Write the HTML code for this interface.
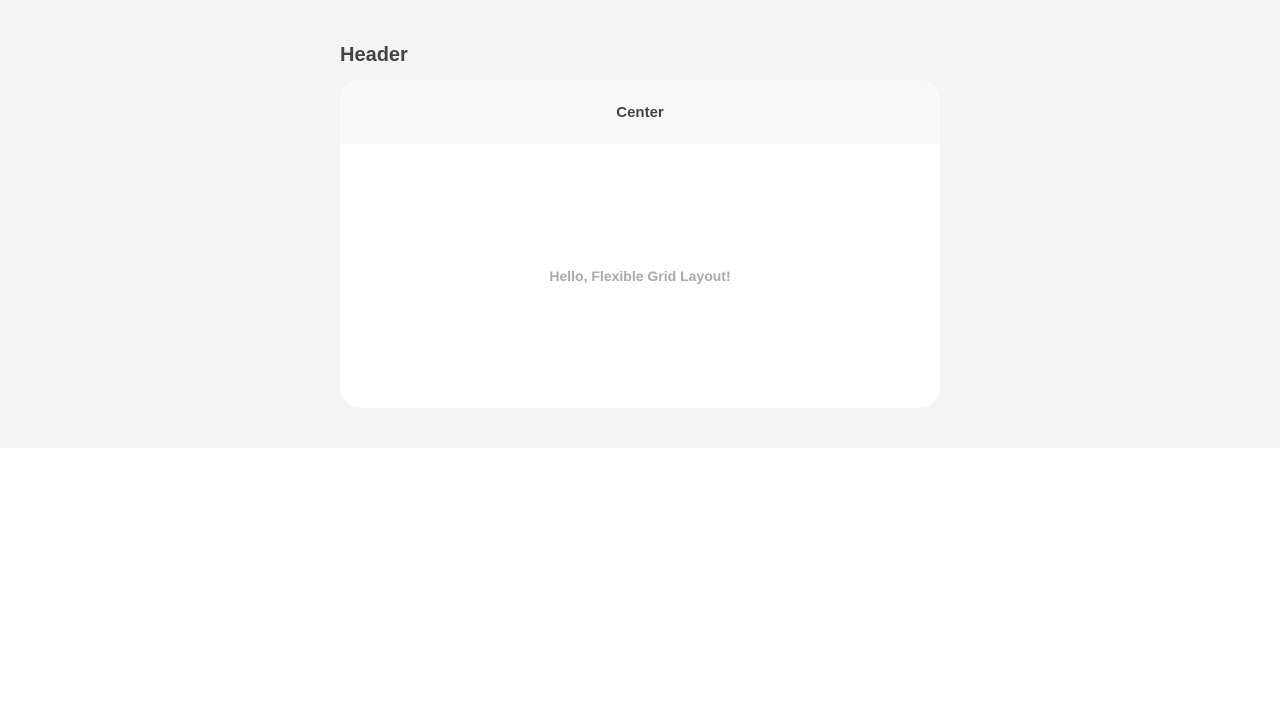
<!DOCTYPE html>
<html><head><meta charset="utf-8"><style>
html,body{margin:0;padding:0;background:#fff;font-family:"Liberation Sans",Arial,sans-serif;}
.band{height:448px;background:#f4f4f4;position:relative;}
h1{position:absolute;left:340px;top:43px;margin:0;font-size:20px;font-weight:bold;color:#444;line-height:24px;}
.card{position:absolute;left:340px;top:80px;width:600px;height:328px;background:#fff;border-radius:20px;overflow:hidden;}
.ch{height:64px;background:#f9f9f9;display:flex;align-items:center;justify-content:center;font-weight:bold;font-size:15px;color:#444;}
.cb{height:264px;display:flex;align-items:center;justify-content:center;font-weight:bold;font-size:14px;color:#aaa;}
</style></head><body>
<div class="band">
<h1>Header</h1>
<div class="card"><div class="ch">Center</div><div class="cb">Hello, Flexible Grid Layout!</div></div>
</div>
</body></html>
